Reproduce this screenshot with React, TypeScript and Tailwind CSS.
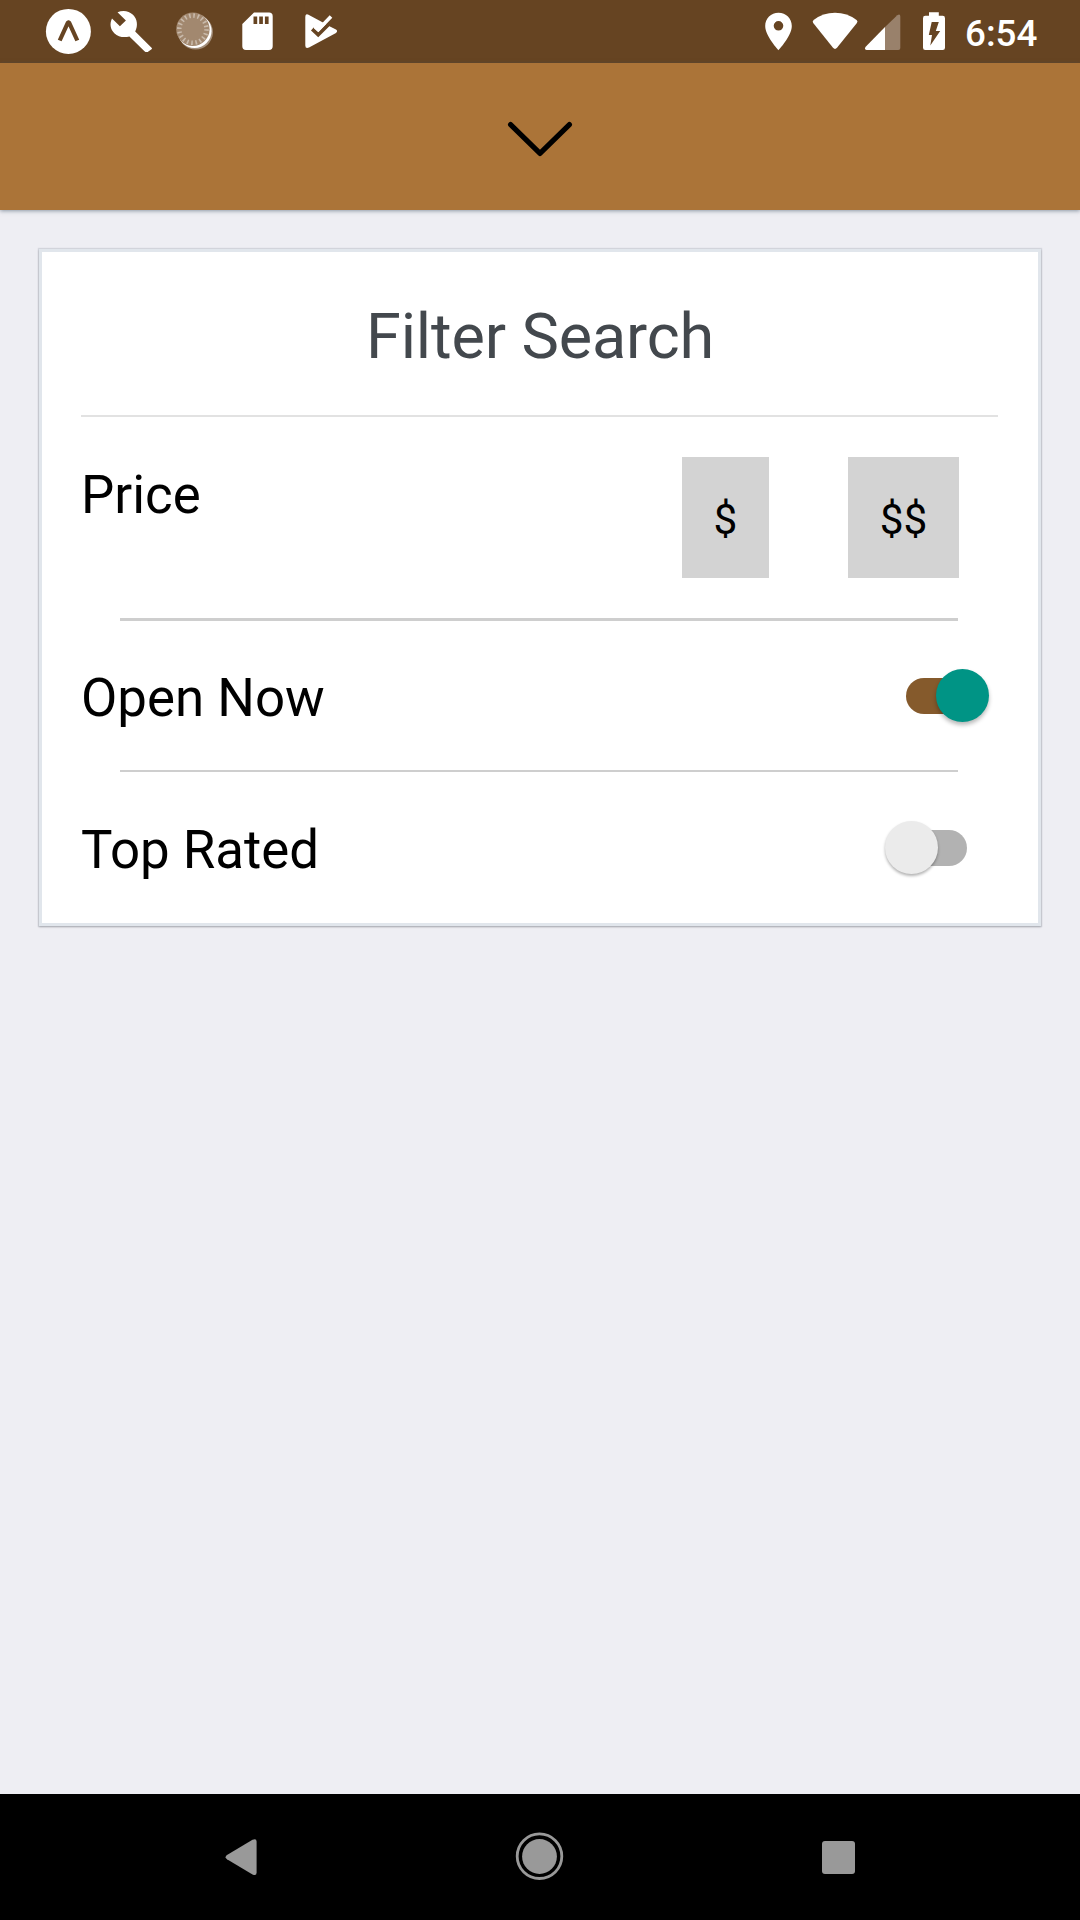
import React from "react";

function StatusBar() {
  return (
    <div className="flex h-[63px] w-full items-start bg-[#664422] text-white">
      <svg className="ml-[44px] h-[63px] w-[50px]" viewBox="44 0 50 63">
        <circle cx="68.4" cy="31.4" r="22.5" fill="#fff" />
        <path d="M59.7 40.5 L68 22.3 H69 L77.3 40.5" fill="none" stroke="#664422" strokeWidth="4.2" strokeLinejoin="bevel" />
      </svg>
      <svg className="ml-[14px] h-[63px] w-[48px]" viewBox="108 0 48 63">
        <path
          d="M151.3 47.5 L135.2 31.5 C138.3 25.5 137.2 19 133 14.8 C128.8 10.6 122.7 10 117.5 12.3 L125.9 20.4 L119.9 26.2 L112 18.6 C109.4 24 110.3 29.3 114.3 33.2 C118.4 37.2 124.2 37.8 129.4 36.4 L144.5 51.2 C145.7 52.4 147.5 52.4 148.7 51.2 L151.2 49.5 C152.3 48.8 152.2 48.3 151.3 47.5 Z"
          fill="#fff"
        />
      </svg>
      <svg className="ml-[16px] h-[63px] w-[44px]" viewBox="172 0 44 63">
        <circle cx="195.6" cy="32.2" r="17.3" fill="#fff" fillOpacity=".4" />
        <circle cx="194.6" cy="31" r="17" fill="#fff" />
        <circle cx="192.9" cy="29.2" r="16.7" fill="#a2886f" />
        <circle cx="192.9" cy="29.2" r="13.6" fill="none" stroke="#c9baab" strokeWidth="4.5" strokeDasharray="1.6 2.67" />
      </svg>
      <svg className="ml-[22px] h-[63px] w-[40px]" viewBox="238 0 40 63">
        <path
          fillRule="evenodd"
          d="M254 12.5 H269 A3.7 3.7 0 0 1 272.7 16.2 V46.3 A3.7 3.7 0 0 1 269 50 H246 A3.7 3.7 0 0 1 242.3 46.3 V24 Z M253.5 16.5 V24 H257.2 V16.5 Z M259.2 16.5 V24 H262.9 V16.5 Z M264.9 16.5 V24 H268.6 V16.5 Z"
          fill="#fff"
        />
      </svg>
      <svg className="ml-[24px] h-[63px] w-[40px]" viewBox="302 0 40 63">
        <path d="M308 14.6 L322 22 L329 26 L336 29.6 Q338.2 31.2 336 33 L309 47.6 Q305.3 49 305.3 45.5 V17 Q305.3 13.2 308 14.6 Z" fill="#fff" />
        <path d="M312.3 29 L318.2 34.6 L334 18.8" fill="none" stroke="#664422" strokeWidth="3.8" />
        <path d="M315 26.8 L318.3 29.8 L331 16.6" fill="none" stroke="#fff" strokeWidth="3.6" />
      </svg>
      <svg className="ml-[418px] h-[63px] w-[36px]" viewBox="760 0 36 63">
        <path fillRule="evenodd" d="M778.5 12.8 C771 12.8 765.2 18.6 765.2 26 C765.2 36 778.5 50.2 778.5 50.2 S791.8 36 791.8 26 C791.8 18.6 786 12.8 778.5 12.8 Z M778.5 21 A4.8 4.8 0 1 1 778.5 30.6 A4.8 4.8 0 1 1 778.5 21 Z" fill="#fff" />
      </svg>
      <svg className="ml-[12px] h-[63px] w-[52px]" viewBox="808 0 52 63">
        <path d="M813.6 20 Q823 12.8 835 12.8 T856.6 20 Q858.2 21.3 856.9 23 L837 47.8 Q835 50 833 47.8 L813.2 23 Q812 21.3 813.6 20 Z" fill="#fff" />
      </svg>
      <svg className="ml-[2px] h-[63px] w-[42px]" viewBox="862 0 42 63">
        <path d="M885 27 L897.3 15.2 Q900.3 13.3 900.3 16.6 V48 Q900.3 50 898.3 50 H885 Z" fill="#99816b" />
        <path d="M885 27 V50 H866.5 Q863.8 49.5 865.7 46.8 Z" fill="#fff" />
      </svg>
      <svg className="ml-[14px] h-[63px] w-[32px]" viewBox="918 0 32 63">
        <path
          fillRule="evenodd"
          d="M929 12.2 H938.8 V15.8 H942.7 Q945 15.8 945 18.2 V47.7 Q945 50 942.7 50 H925.3 Q923 50 923 47.7 V18.2 Q923 15.8 925.3 15.8 H929 Z M931.7 22 L928.8 35 H932 L930.3 45.6 L940.2 31 H935.8 L938.8 22 Z"
          fill="#fff"
        />
      </svg>
      <span className="ml-[15px] mt-[12px] text-[36.75px] font-medium leading-[43px]">6:54</span>
    </div>
  );
}

function Header() {
  return (
    <div className="relative flex h-[147px] w-full justify-center bg-[#ab7438] pt-[57px] shadow-[0_1px_4px_rgba(60,80,100,0.55)]">
      <svg className="h-[40px] w-[70px]" viewBox="505 120 70 40">
        <path d="M510.6 124.6 L540 153.4 L569.4 124.6" fill="none" stroke="#000" strokeWidth="5.2" strokeLinecap="round" strokeLinejoin="round" />
      </svg>
    </div>
  );
}

function Toggle({ on }: { on: boolean }) {
  return on ? (
    <div className="mr-[9px] flex h-[53px] w-[83px] items-center">
      <div className="h-[36px] w-[66px] shrink-0 rounded-full bg-[#855a2c]" />
      <div className="-ml-[36px] h-[53px] w-[53px] shrink-0 rounded-full bg-[#009485] shadow-[0_3px_4px_rgba(0,0,0,0.28)]" />
    </div>
  ) : (
    <div className="mr-[30px] flex h-[53px] w-[83px] items-center">
      <div className="relative h-[53px] w-[53px] shrink-0 rounded-full bg-[#ebebeb] shadow-[0_2px_3px_rgba(0,0,0,0.3)]" />
      <div className="-ml-[36px] h-[36px] w-[65px] shrink-0 rounded-full bg-[#b2b2b2]" />
    </div>
  );
}

function PriceButton({ label }: { label: string }) {
  return (
    <button className="h-[121px] bg-[#d3d3d3] px-[31.7px] pt-[4px] text-[42.3px] leading-[49px] text-black">
      {label}
    </button>
  );
}

function FilterCard() {
  return (
    <div className="mx-[39px] mt-[39px] h-[677px] border-[3px] border-[#e1e6ec] bg-white pl-[39px] pr-[40px] text-black shadow-[0_0_1px_1px_rgba(90,100,120,0.16),0_1px_2px_rgba(0,0,0,0.24)]">
      <h1 className="-mr-[1px] mt-[48px] text-center text-[63px] leading-[74px] tracking-[-0.15px] text-[#43484d]">Filter Search</h1>
      <div className="mt-[41px] h-[2px] bg-[#e2e2e2]" />
      <div className="flex h-[201px] pt-[40px]">
        <div className="mt-[7px] text-[52.8px] leading-[62px]">Price</div>
        <div className="ml-auto mr-[39px] flex items-start gap-[79px]">
          <PriceButton label="$" />
          <PriceButton label="$$" />
        </div>
      </div>
      <div className="ml-[39px] mr-[40px] h-[3px] bg-[#cecece]" />
      <div className="flex h-[149px] items-start justify-between">
        <div className="mt-[46px] text-[52.8px] leading-[62px]">Open Now</div>
        <div className="mt-[48px]">
          <Toggle on />
        </div>
      </div>
      <div className="ml-[39px] mr-[40px] h-[2px] bg-[#cecece]" />
      <div className="flex h-[149px] items-start justify-between">
        <div className="mt-[47px] text-[52.8px] leading-[62px]">Top Rated</div>
        <div className="mt-[49px]">
          <Toggle on={false} />
        </div>
      </div>
    </div>
  );
}

function NavigationBar() {
  return (
    <div className="mt-auto flex h-[126px] w-full items-center bg-black">
      <svg className="ml-[220px] h-[126px] w-[42px]" viewBox="220 1794 42 126">
        <path d="M227 1855 L252.5 1839.8 Q256.6 1838 256.6 1841.5 V1872.8 Q256.6 1876.2 252.5 1874.5 L227 1859.2 Q224.2 1857.2 227 1855 Z" fill="#999" />
      </svg>
      <svg className="ml-[248px] h-[126px] w-[60px]" viewBox="510 1794 60 126">
        <circle cx="539.5" cy="1856.2" r="22.3" fill="none" stroke="#999" strokeWidth="2.8" />
        <circle cx="539.5" cy="1856.5" r="17.4" fill="#999" />
      </svg>
      <div className="ml-[251.5px] h-[33px] w-[33px] rounded-[3px] bg-[#999]" />
    </div>
  );
}

export default function App() {
  return (
    <div className="flex h-[1920px] w-[1080px] flex-col overflow-hidden bg-[#eeeef3] font-['Roboto',sans-serif]">
      <StatusBar />
      <Header />
      <FilterCard />
      <NavigationBar />
    </div>
  );
}
